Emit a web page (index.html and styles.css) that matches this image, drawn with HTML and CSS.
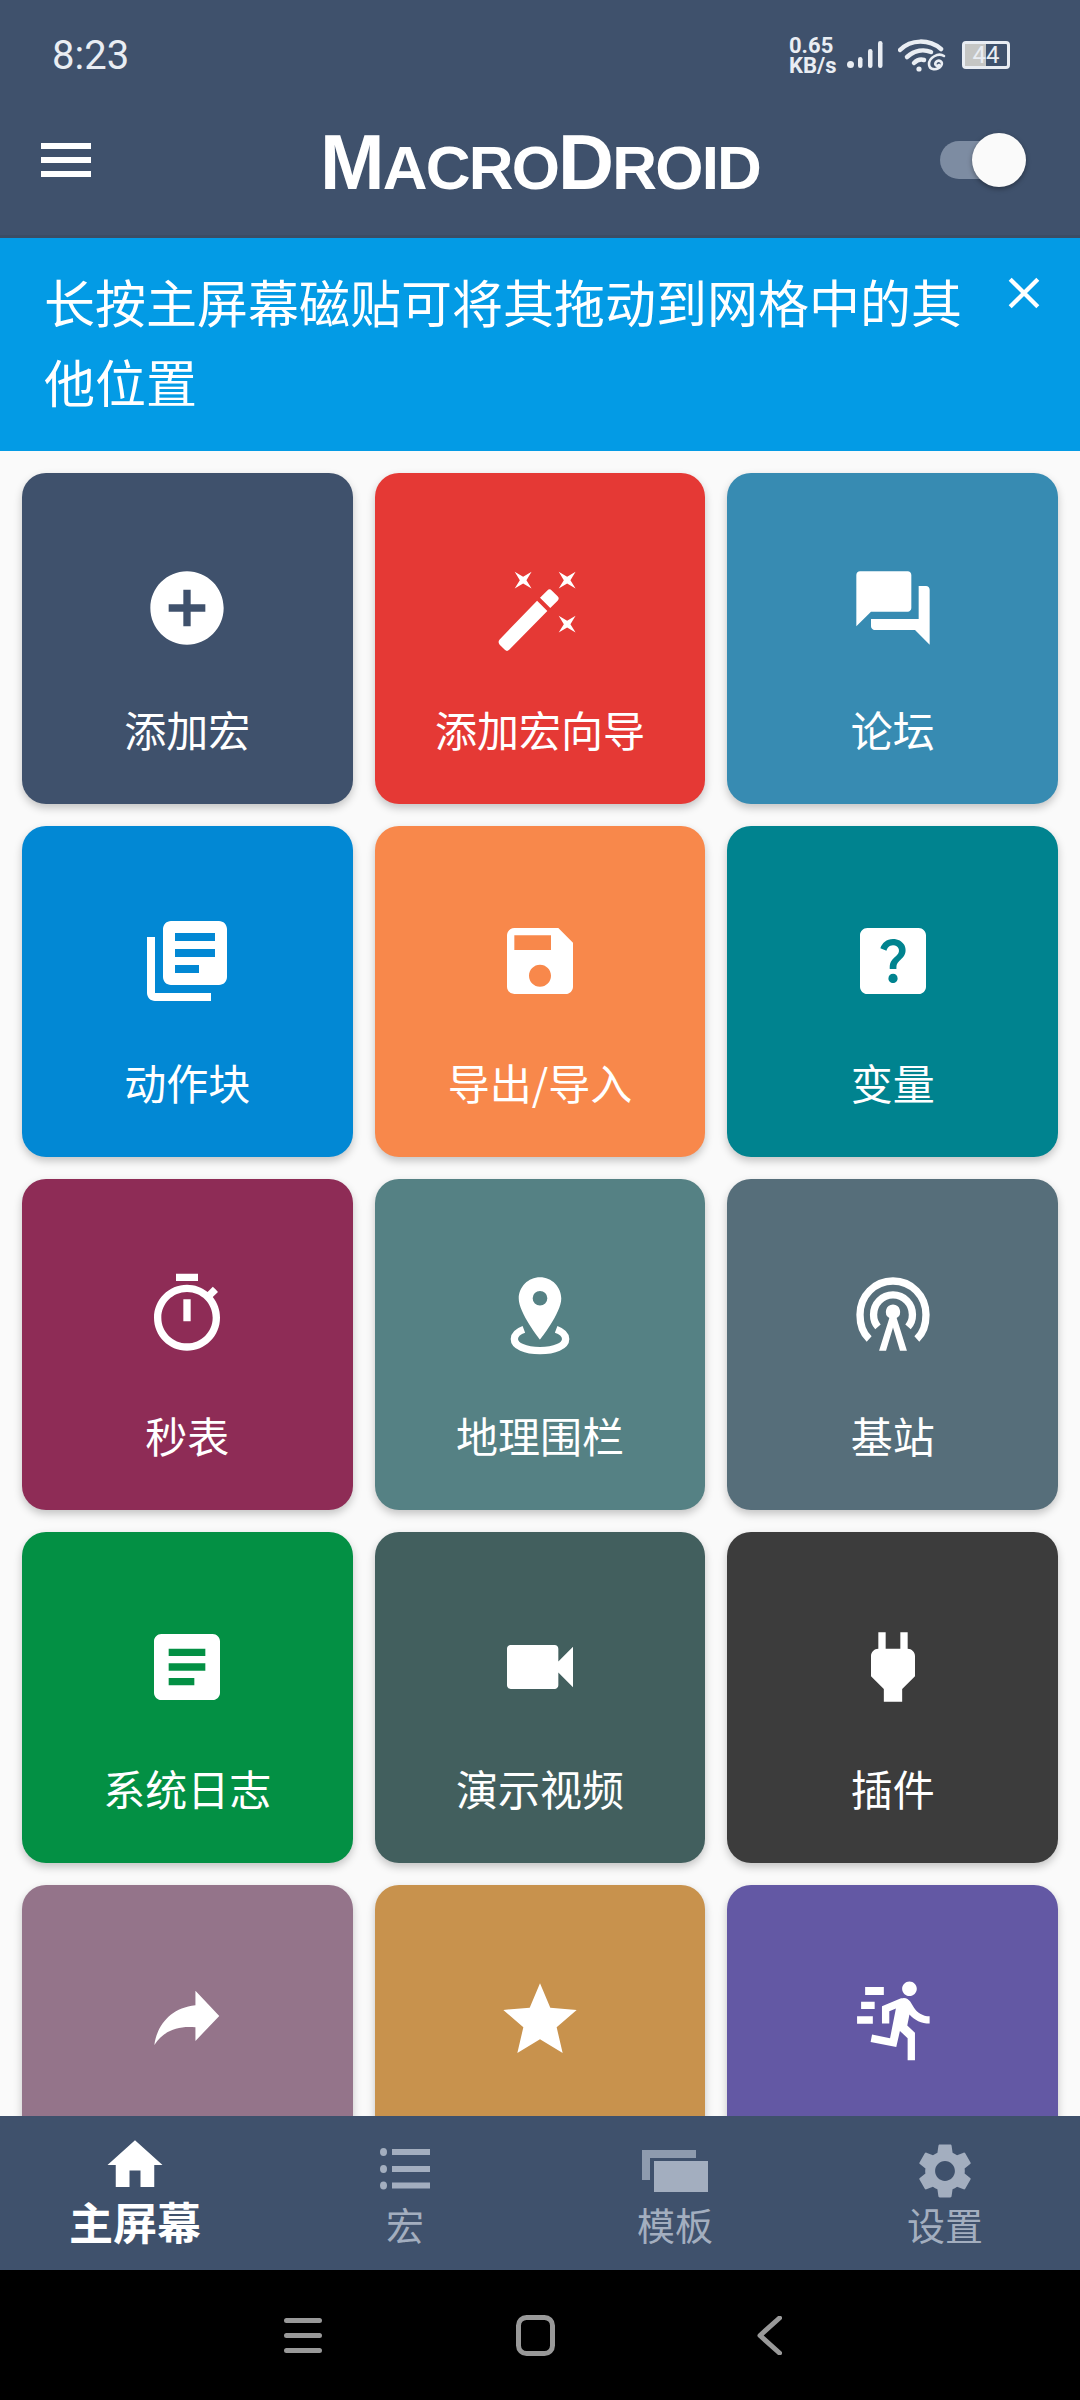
FILE: index.html
```html
<!DOCTYPE html>
<html lang="zh-CN">

<head>
    <meta charset="UTF-8">
    <meta name="viewport" content="width=device-width, initial-scale=1.0">
    <title>MacroDroid</title>
    <link rel="stylesheet" href="styles.css">
</head>

<body>
    <div class="app">
        <header class="topbar">
            <div class="status">
                <span class="time">8:23</span>
                <div class="status-right">
                    <div class="speed">0.65<br>KB/s</div>
                    <svg class="signal" viewBox="0 0 36 28">
                        <circle cx="3.5" cy="23.5" r="3.5" />
                        <rect x="11" y="16" width="4.5" height="11" rx="2.2" />
                        <rect x="21" y="8" width="4.5" height="19" rx="2.2" />
                        <rect x="31" y="0" width="4.5" height="27" rx="2.2" />
                    </svg>
                    <svg class="wifi" viewBox="0 0 50 34">
                        <path class="wifi-arc" d="M2 12C13 1 31 1 43 11" />
                        <path class="wifi-arc" d="M9 19C17 12 26 11 33 14" />
                        <path class="wifi-arc" d="M16 25C19 22 23 21 26 22" />
                        <circle cx="21" cy="31" r="2.6" />
                        <path class="wifi-link" d="M46 18C40 14 31 20 31 26C31 32 39 33 43 28C46 24 41 21 38 24C36 27 39 29 41 27" />
                    </svg>
                    <div class="battery"><span class="battery-fill"></span><span class="battery-text">44</span></div>
                </div>
            </div>
            <div class="toolbar">
                <div class="burger"><span></span><span></span><span></span></div>
                <div class="logo"><span class="logo-cap">M</span>ACRO<span class="logo-cap">D</span>ROID</div>
                <div class="toggle"><span class="toggle-thumb"></span></div>
            </div>
        </header>

        <section class="tip">
            <p class="tip-text">长按主屏幕磁贴可将其拖动到网格中的其他位置</p>
            <svg class="tip-close" viewBox="0 0 32 32">
                <path d="M3 3L29 29M29 3L3 29" />
            </svg>
        </section>

        <main class="tiles">
            <div class="grid">
                <div class="tile c-navy">
                    <svg class="tile-icon" viewBox="0 0 24 24"><path d="M12 2C6.48 2 2 6.48 2 12s4.48 10 10 10 10-4.48 10-10S17.52 2 12 2zm5 11h-4v4h-2v-4H7v-2h4V7h2v4h4v2z" /></svg>
                    <span class="tile-label">添加宏</span>
                </div>
                <div class="tile c-red">
                    <svg class="tile-icon" viewBox="0 0 24 24">
                        <path d="M5.100 2.100L7.400 3.500 9.700 2.100 8.300 4.400 9.700 6.700 7.400 5.300 5.100 6.700 6.500 4.400z" />
                        <path d="M17.100 2.100L19.400 3.500 21.700 2.100 20.300 4.400 21.700 6.700 19.400 5.300 17.100 6.700 18.500 4.400z" />
                        <path d="M17.100 14.100L19.400 15.500 21.700 14.100 20.300 16.400 21.700 18.700 19.400 17.300 17.100 18.700 18.500 16.400z" />
                        <path d="M1 20.600L11.200 10 14 12.800 3.600 23.400C3.200 23.800 2.800 23.800 2.400 23.400L1 22C.6 21.600.6 21 1 20.600zM12 9.200L14 7.200C14.400 6.800 14.800 6.800 15.200 7.200L16.800 8.800C17.200 9.200 17.200 9.600 16.800 10L14.800 12z" />
                    </svg>
                    <span class="tile-label">添加宏向导</span>
                </div>
                <div class="tile c-forum">
                    <svg class="tile-icon" viewBox="0 0 24 24"><path d="M21 6h-2v9H6v2c0 .55.45 1 1 1h11l4 4V7c0-.55-.45-1-1-1zm-4 6V3c0-.55-.45-1-1-1H3c-.55 0-1 .45-1 1v14l4-4h10c.55 0 1-.45 1-1z" /></svg>
                    <span class="tile-label">论坛</span>
                </div>

                <div class="tile c-blue">
                    <svg class="tile-icon tile-icon-lg" viewBox="0 0 24 24"><path d="M4 6H2v14c0 1.1.9 2 2 2h14v-2H4V6zm16-4H8c-1.1 0-2 .9-2 2v12c0 1.1.9 2 2 2h12c1.1 0 2-.9 2-2V4c0-1.1-.9-2-2-2zm-1 9H9V9h10v2zm-4 4H9v-2h6v2zm4-8H9V5h10v2z" /></svg>
                    <span class="tile-label">动作块</span>
                </div>
                <div class="tile c-orange">
                    <svg class="tile-icon" viewBox="0 0 24 24"><path d="M17 3H5c-1.11 0-2 .9-2 2v14c0 1.1.89 2 2 2h14c1.1 0 2-.9 2-2V7l-4-4zm-5 16c-1.66 0-3-1.34-3-3s1.34-3 3-3 3 1.34 3 3-1.34 3-3 3zm3-10H5V5h10v4z" /></svg>
                    <span class="tile-label">导出/导入</span>
                </div>
                <div class="tile c-teal">
                    <svg class="tile-icon" viewBox="0 0 24 24"><path d="M19 3H5c-1.11 0-2 .9-2 2v14c0 1.1.89 2 2 2h14c1.1 0 2-.9 2-2V5c0-1.1-.9-2-2-2zm-6.99 15c-.7 0-1.26-.56-1.26-1.26 0-.71.56-1.25 1.26-1.25.71 0 1.25.54 1.25 1.25-.01.69-.54 1.26-1.25 1.26zm3.01-7.4c-.76 1.11-1.48 1.46-1.87 2.17-.16.29-.22.48-.22 1.41h-1.82c0-.49-.08-1.29.31-1.98.49-.87 1.42-1.39 1.96-2.16.57-.81.25-2.33-1.37-2.33-1.06 0-1.58.8-1.8 1.48l-1.65-.7C9.01 7.15 10.22 6 11.99 6c1.48 0 2.49.67 3.01 1.52.44.72.7 2.07.02 3.08z" /></svg>
                    <span class="tile-label">变量</span>
                </div>

                <div class="tile c-plum">
                    <svg class="tile-icon" viewBox="0 0 24 24"><path d="M15 1H9v2h6V1zm-4 13h2V8h-2v6zm8.03-6.61l1.42-1.42c-.43-.51-.9-.99-1.41-1.41l-1.42 1.42C16.07 4.74 14.12 4 12 4c-4.97 0-9 4.03-9 9s4.02 9 9 9 9-4.03 9-9c0-2.12-.74-4.07-1.97-5.61zM12 20c-3.87 0-7-3.13-7-7s3.13-7 7-7 7 3.13 7 7-3.13 7-7 7z" /></svg>
                    <span class="tile-label">秒表</span>
                </div>
                <div class="tile c-sage">
                    <svg class="tile-icon" viewBox="0 0 24 24">
                        <path d="M12 2C8.800 2 6.200 4.600 6.200 7.800 6.200 11.800 12 19 12 19s5.800-7.200 5.800-11.200C17.800 4.600 15.200 2 12 2zm0 7.700a2 2 0 1 1 0-4 2 2 0 0 1 0 4z" />
                        <path class="icon-line" d="M7.600 16.200C5.700 16.900 5 17.800 5 18.800 5 20.700 8 22 12 22s7-1.300 7-3.200C19 17.800 18.300 16.900 16.400 16.200" />
                    </svg>
                    <span class="tile-label">地理围栏</span>
                </div>
                <div class="tile c-slate">
                    <svg class="tile-icon" viewBox="0 0 24 24">
                        <path class="icon-line" d="M5.500 18.800C3.400 16.900 3 14.700 3 12.200 3 7 7 3 12 3s9 4 9 9.200C21 14.700 20.600 16.900 18.500 18.800" />
                        <path class="icon-line" d="M7.900 15.500C7 14.500 6.700 13.300 6.700 12.200 6.700 9.200 9 6.800 12 6.800s5.300 2.400 5.300 5.400C17.300 13.300 17 14.500 16.100 15.500" />
                        <path d="M12 9.400a2 2 0 0 1 1 3.700L15.800 22H13.900L12 15.700 10.100 22H8.200L11 13.100A2 2 0 0 1 12 9.400z" />
                    </svg>
                    <span class="tile-label">基站</span>
                </div>

                <div class="tile c-green">
                    <svg class="tile-icon" viewBox="0 0 24 24"><path d="M19 3H5c-1.1 0-2 .9-2 2v14c0 1.1.9 2 2 2h14c1.1 0 2-.9 2-2V5c0-1.1-.9-2-2-2zm-5 14H7v-2h7v2zm3-4H7v-2h10v2zm0-4H7V7h10v2z" /></svg>
                    <span class="tile-label">系统日志</span>
                </div>
                <div class="tile c-pine">
                    <svg class="tile-icon" viewBox="0 0 24 24"><path d="M17 10.500V7c0-.55-.45-1-1-1H4c-.55 0-1 .45-1 1v10c0 .55.45 1 1 1h12c.55 0 1-.45 1-1v-3.500l4 4v-11l-4 4z" /></svg>
                    <span class="tile-label">演示视频</span>
                </div>
                <div class="tile c-coal">
                    <svg class="tile-icon" viewBox="0 0 24 24"><path d="M16 7V2.500h-2V7h-4V2.500H8V7h-.01C6.900 6.990 6 7.890 6 8.980v5.520L9.500 18v3.500h5V18l3.500-3.500V9c0-1.100-.9-2-2-2z" /></svg>
                    <span class="tile-label">插件</span>
                </div>

                <div class="tile c-mauve">
                    <svg class="tile-icon" viewBox="0 0 24 24"><path d="M14.300 4L20.800 10.900 14.300 17.700V14C9.500 13.500 5.500 15 3.100 18.800 3.800 13.500 7.500 8.700 14.300 8z" /></svg>
                </div>
                <div class="tile c-amber">
                    <svg class="tile-icon" viewBox="0 0 24 24"><path d="M12 17.270L18.180 21l-1.640-7.030L22 9.240l-7.190-.61L12 2 9.190 8.630 2 9.240l5.460 4.730L5.820 21z" /></svg>
                </div>
                <div class="tile c-violet">
                    <svg class="tile-icon" viewBox="0 0 24 24">
                        <path d="M4.400 3H9.500V5.200H4.400zM3.300 7H7V9H3.300zM2.200 11H6.500V13H2.200z" />
                        <path transform="translate(3 0)" d="M13.490 5.480c1.100 0 2-.9 2-2s-.9-2-2-2-2 .9-2 2 .9 2 2 2zm-3.600 13.900l1-4.400 2.100 2v6h2v-7.500l-2.100-2 .6-3c1.300 1.500 3.300 2.500 5.500 2.500v-2c-1.900 0-3.500-1-4.300-2.400l-1-1.600c-.4-.6-1-1-1.700-1-.3 0-.5.100-.8.100l-5.200 2.200v4.700h2v-3.400l1.800-.7-1.600 8.100-4.900-1-.4 2 7 1.400z" />
                    </svg>
                </div>
            </div>
        </main>

        <nav class="tabs">
            <div class="tab tab-active">
                <svg class="tab-icon" viewBox="0 0 24 24"><path d="M10 20v-6h4v6h5v-8h3L12 3 2 12h3v8z" /></svg>
                <span class="tab-label">主屏幕</span>
            </div>
            <div class="tab">
                <svg class="tab-icon" viewBox="0 0 66 66">
                    <ellipse cx="11.500" cy="14" rx="3.500" ry="4" />
                    <ellipse cx="11.500" cy="31" rx="3.500" ry="4" />
                    <ellipse cx="11.500" cy="47.500" rx="3.500" ry="4" />
                    <rect x="20" y="11" width="38" height="6" />
                    <rect x="20" y="28" width="38" height="6" />
                    <rect x="20" y="44.500" width="38" height="6" />
                </svg>
                <span class="tab-label">宏</span>
            </div>
            <div class="tab">
                <svg class="tab-icon" viewBox="0 0 66 66">
                    <path class="tab-back" d="M0 12H54V20H8V42H0z" />
                    <rect x="12" y="23" width="54" height="31" />
                </svg>
                <span class="tab-label">模板</span>
            </div>
            <div class="tab">
                <svg class="tab-icon" viewBox="0 0 24 24"><path d="M19.140 12.940c.04-.3.06-.61.06-.94 0-.32-.02-.64-.07-.94l2.030-1.580c.18-.14.23-.41.12-.61l-1.920-3.320c-.12-.22-.37-.29-.59-.22l-2.390.96c-.5-.38-1.030-.7-1.620-.94l-.36-2.540c-.04-.24-.24-.41-.48-.41h-3.840c-.24 0-.43.17-.47.41l-.36 2.540c-.59.24-1.130.57-1.620.94l-2.390-.96c-.22-.08-.47 0-.59.22L2.740 8.870c-.12.21-.08.47.12.61l2.030 1.580c-.05.3-.09.63-.09.94s.02.64.07.94l-2.030 1.580c-.18.14-.23.41-.12.61l1.920 3.320c.12.22.37.29.59.22l2.390-.96c.5.38 1.030.7 1.620.94l.36 2.540c.05.24.24.41.48.41h3.840c.24 0 .44-.17.47-.41l.36-2.540c.59-.24 1.130-.56 1.620-.94l2.390.96c.22.08.47 0 .59-.22l1.920-3.320c.12-.22.07-.47-.12-.61l-2.010-1.580zM12 15.600c-1.980 0-3.600-1.620-3.600-3.600s1.620-3.600 3.600-3.600 3.600 1.620 3.600 3.600-1.620 3.600-3.600 3.600z" /></svg>
                <span class="tab-label">设置</span>
            </div>
        </nav>

        <footer class="sysnav">
            <svg class="sys-menu" viewBox="0 0 38 35">
                <path d="M2.500 2.500H35.500M2.500 17.500H35.500M2.500 32.500H35.500" />
            </svg>
            <svg class="sys-home" viewBox="0 0 39 41">
                <rect x="2.500" y="2.500" width="34" height="36" rx="8" />
            </svg>
            <svg class="sys-back" viewBox="0 0 25 39">
                <path d="M22.500 2L3 19.500 22.500 37" />
            </svg>
        </footer>
    </div>
</body>

</html>
```

FILE: styles.css
```css
* {
    box-sizing: border-box;
}

body {
    margin: 0;
    font-family: "Noto Sans CJK SC", "Noto Sans", sans-serif;
    background-color: #fafafa;
}

.app {
    width: 1080px;
    height: 2400px;
    display: flex;
    flex-direction: column;
    overflow: hidden;
}

/* top bar */
.topbar {
    height: 238px;
    flex: none;
    background-color: #3f516c;
    border-bottom: 3px solid #3b4c64;
}

.status {
    height: 84px;
    padding: 26px 70px 0 52px;
    display: flex;
    justify-content: space-between;
    align-items: center;
    color: #e9edf3;
}

.time {
    font-family: Roboto, sans-serif;
    font-size: 40px;
}

.status-right {
    display: flex;
    align-items: center;
}

.speed {
    width: 58px;
    margin-top: 2px;
    font-family: Roboto, sans-serif;
    font-weight: 700;
    font-size: 22px;
    line-height: 20px;
}

.signal {
    width: 36px;
    height: 28px;
    fill: #e9edf3;
}

.wifi {
    width: 50px;
    height: 34px;
    margin-left: 15px;
    fill: #e9edf3;
}

.wifi-arc,
.wifi-link {
    fill: none;
    stroke: #e9edf3;
    stroke-width: 4.5;
    stroke-linecap: round;
}

.wifi-link {
    stroke-width: 2.6;
}

.battery {
    width: 48px;
    height: 28px;
    margin-left: 14px;
    position: relative;
    border: 3px solid #e9edf3;
    border-radius: 4px;
    display: flex;
    align-items: center;
    justify-content: center;
}

.battery-fill {
    position: absolute;
    left: 0;
    top: 0;
    bottom: 0;
    width: 21px;
    background-color: #c5c6c4;
}

.battery-text {
    position: relative;
    font-family: Roboto, sans-serif;
    font-size: 24px;
    line-height: 22px;
}

.toolbar {
    height: 151px;
    padding: 0 41px;
    display: grid;
    grid-template-columns: 1fr auto 1fr;
    align-items: center;
}

.burger {
    width: 50px;
    display: flex;
    flex-direction: column;
    gap: 8px;
}

.burger span {
    height: 6px;
    background-color: #fff;
}

.logo {
    font-family: "Liberation Sans", Arial, sans-serif;
    font-weight: 700;
    font-size: 62px;
    line-height: 80px;
    letter-spacing: -1.8px;
    color: #fff;
    padding-top: 10px;
}

.logo-cap {
    font-size: 77.500px;
}

.toggle {
    width: 70px;
    height: 38px;
    margin-right: 29px;
    justify-self: end;
    position: relative;
    border-radius: 19px;
    background-color: #7d8ca2;
}

.toggle-thumb {
    position: absolute;
    right: -16px;
    top: -8px;
    width: 54px;
    height: 54px;
    border-radius: 50%;
    background-color: #fafafa;
    box-shadow: 0 2px 5px rgba(0, 0, 0, 0.35);
}

/* blue hint */
.tip {
    height: 213px;
    flex: none;
    padding: 23px 39px 0 44px;
    display: flex;
    justify-content: space-between;
    align-items: flex-start;
    background-color: #039be5;
}

.tip-text {
    width: 920px;
    margin: 0;
    font-size: 51px;
    line-height: 80px;
    color: #fff;
}

.tip-close {
    width: 34px;
    height: 34px;
    margin-top: 15px;
    fill: none;
    stroke: #fff;
    stroke-width: 4;
}

/* tile grid */
.tiles {
    flex: 1;
    min-height: 0;
    overflow: hidden;
    padding: 22px 22px 0;
}

.grid {
    display: grid;
    grid-template-columns: repeat(3, 1fr);
    grid-auto-rows: 331px;
    gap: 22px;
}

.tile {
    display: flex;
    flex-direction: column;
    align-items: center;
    border-radius: 24px;
    box-shadow: 0 4px 8px rgba(0, 0, 0, 0.22);
    color: #fff;
}

.tile-icon {
    width: 88px;
    height: 88px;
    flex: none;
    margin-top: 91px;
    margin-bottom: 50px;
    fill: #fff;
}

.tile-icon-lg {
    width: 96px;
    height: 96px;
    margin-top: 87px;
    margin-bottom: 46px;
}

.icon-line {
    fill: none;
    stroke: #fff;
    stroke-width: 2;
}

.tile-label {
    font-size: 42px;
    line-height: 54px;
}

.c-navy { background-color: #3f516c; }
.c-red { background-color: #e53935; }
.c-forum { background-color: #378bb2; }
.c-blue { background-color: #0288d4; }
.c-orange { background-color: #f8884b; }
.c-teal { background-color: #00838f; }
.c-plum { background-color: #8e2c56; }
.c-sage { background-color: #558184; }
.c-slate { background-color: #566e7a; }
.c-green { background-color: #039044; }
.c-pine { background-color: #425f5e; }
.c-coal { background-color: #3c3c3c; }
.c-mauve { background-color: #94748a; }
.c-amber { background-color: #c8924d; }
.c-violet { background-color: #6358a4; }

/* bottom tabs */
.tabs {
    height: 154px;
    flex: none;
    position: relative;
    display: grid;
    grid-template-columns: repeat(4, 270px);
    background-color: #3f516c;
}

.tab {
    display: flex;
    flex-direction: column;
    align-items: center;
    padding-top: 22px;
    color: #a3aebf;
}

.tab-icon {
    width: 66px;
    height: 66px;
    flex: none;
    fill: #a3aebf;
}

.tab-back {
    opacity: 0.8;
}

.tab-label {
    font-size: 38px;
    line-height: 40px;
}

.tab-active {
    padding-top: 16px;
    color: #fff;
}

.tab-active .tab-icon {
    fill: #fff;
}

.tab-active .tab-label {
    margin-top: 3px;
    font-size: 44px;
    font-weight: 700;
}

/* android nav bar */
.sysnav {
    height: 130px;
    flex: none;
    display: flex;
    align-items: center;
    padding: 0 0 0 284px;
    background-color: #000;
}

.sysnav svg {
    fill: none;
    stroke: #999;
    stroke-width: 5;
    stroke-linecap: round;
    stroke-linejoin: round;
}

.sys-menu {
    width: 38px;
    height: 35px;
}

.sys-home {
    width: 39px;
    height: 41px;
    margin-left: 194px;
}

.sys-back {
    width: 25px;
    height: 39px;
    margin-left: 202px;
}
```
